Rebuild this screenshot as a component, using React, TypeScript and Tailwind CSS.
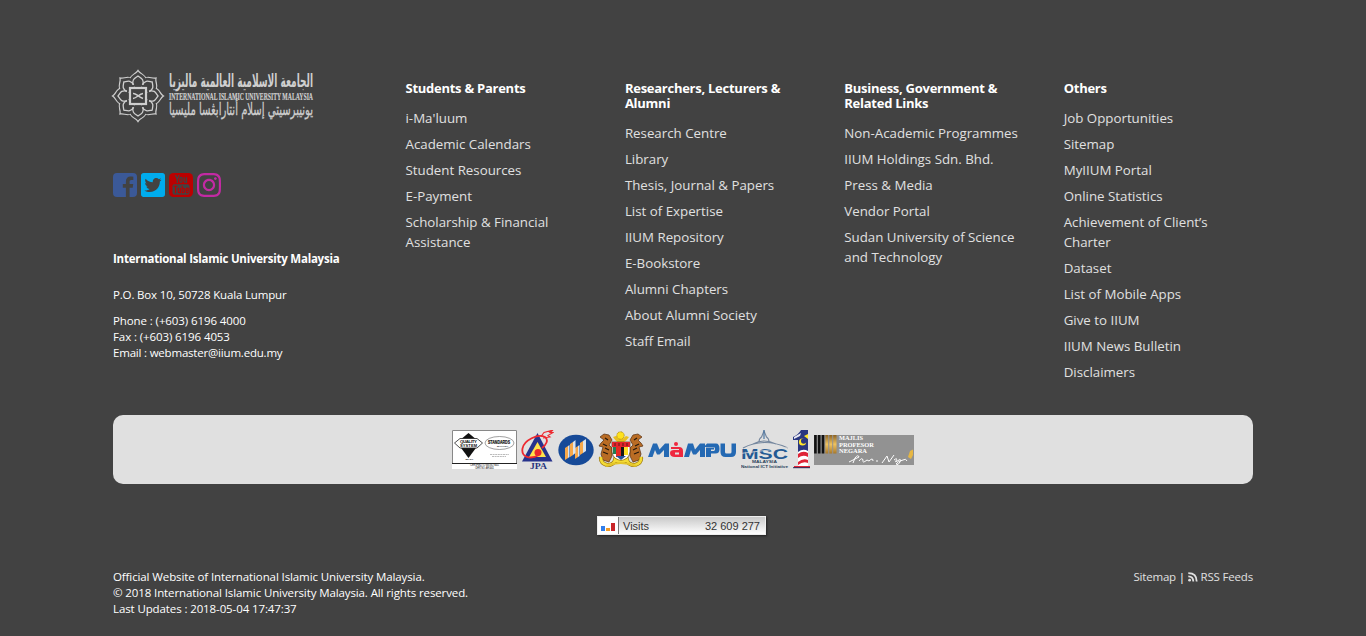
import React from "react";
import { FaInstagram, FaTwitterSquare } from "react-icons/fa";

type Column = { title: string[]; links: string[][] };

const columns: Column[] = [
  {
    title: ["Students & Parents"],
    links: [["i-Ma'luum"], ["Academic Calendars"], ["Student Resources"], ["E-Payment"], ["Scholarship & Financial", "Assistance"]],
  },
  {
    title: ["Researchers, Lecturers &", "Alumni"],
    links: [["Research Centre"], ["Library"], ["Thesis, Journal & Papers"], ["List of Expertise"], ["IIUM Repository"], ["E-Bookstore"], ["Alumni Chapters"], ["About Alumni Society"], ["Staff Email"]],
  },
  {
    title: ["Business, Government &", "Related Links"],
    links: [["Non-Academic Programmes"], ["IIUM Holdings Sdn. Bhd."], ["Press & Media"], ["Vendor Portal"], ["Sudan University of Science", "and Technology"]],
  },
  {
    title: ["Others"],
    links: [["Job Opportunities"], ["Sitemap"], ["MyIIUM Portal"], ["Online Statistics"], ["Achievement of Client’s", "Charter"], ["Dataset"], ["List of Mobile Apps"], ["Give to IIUM"], ["IIUM News Bulletin"], ["Disclaimers"]],
  },
];

const petals = [0, 45, 90, 135, 180, 225, 270, 315];
const petalShape = "M25 1.500C27 4.500 33.500 5.500 32.500 11C32 15 29 17 25 18C21 17 18 15 17.500 11C16.500 5.500 23 4.500 25 1.500Z";

function UniversityLogo() {
  return (
    <svg width="204" height="52" viewBox="0 0 204 52" className="block overflow-visible">
      <g stroke="#cfcfcf" fill="none">
        {petals.map((a) => <path key={a} d={petalShape} transform={`rotate(${a} 25 26)`} strokeWidth="2.400" />)}
        {petals.map((a) => <path key={a} d={petalShape} transform={`rotate(${a} 25 26)`} fill="#424242" stroke="none" />)}
        {petals.map((a) => <path key={a} d="M20 15C19 9 21.500 8.500 25 6C28.500 8.500 31 9 30 15" transform={`rotate(${a} 25 26)`} strokeWidth="1.300" />)}
        <rect x="17" y="18" width="16" height="16" fill="#424242" strokeWidth="2.200" />
        <path d="M20 23.500C23 23 24 26 30 28.500M20 28.500C24 28 26 24 30 23.500" strokeWidth="1.500" />
      </g>
      <g fill="#cfcfcf">
        <text x="200" y="16.500" direction="rtl" fontFamily="DejaVu Sans, sans-serif" fontWeight="bold" fontSize="18" textLength="144" lengthAdjust="spacingAndGlyphs">الجامعة الاسلامية العالمية ماليزيا</text>
        <text x="56" y="29.500" fontFamily="Liberation Serif, serif" fontWeight="bold" fontSize="9.500" stroke="#cfcfcf" strokeWidth=".2" textLength="144" lengthAdjust="spacingAndGlyphs">INTERNATIONAL ISLAMIC UNIVERSITY MALAYSIA</text>
        <text x="200" y="45" direction="rtl" fontFamily="DejaVu Sans, sans-serif" fontSize="16.500" stroke="#cfcfcf" strokeWidth=".3" textLength="144" lengthAdjust="spacingAndGlyphs">يونيبرسيتي إسلام أنتارابڠسا مليسيا</text>
      </g>
    </svg>
  );
}

function Facebook() {
  return (
    <svg width="24" height="24" viewBox="0 0 24 24">
      <path fill="#3b5998" d="M4 0H20Q24 0 24 4V20Q24 24 20 24H16.600V14.700H19.700L20.200 11.100H16.600V8.800C16.600 7.700 16.900 7 18.400 7H20.300V3.800C20 3.700 18.800 3.600 17.500 3.600C14.800 3.600 12.900 5.300 12.900 8.400V11.100H9.800V14.700H12.900V24H4Q0 24 0 20V4Q0 0 4 0Z" />
    </svg>
  );
}

function Youtube() {
  return (
    <svg width="24" height="24" viewBox="0 0 24 24">
      <rect width="24" height="24" rx="4.500" fill="#bb0000" />
      <g fill="none" stroke="#424242" strokeWidth="1.250">
        <path d="M6.500 2L8.300 6.200L10.100 2M8.300 6V10M15.200 4.200V8.300Q15.200 9.500 16.200 9.200Q17.500 8.800 17.500 8V4.200M17.500 8V10" />
        <rect x="10.900" y="4.400" width="2.200" height="5" rx="1.100" />
      </g>
      <rect x="3.500" y="11.200" width="17" height="10.600" rx="2" fill="#424242" />
      <g fill="none" stroke="#bb0000" strokeWidth="1.150">
        <path d="M4.600 13.200H8.400M6.500 13.200V20.200M9.200 14.800V19Q10 20.500 11.400 18.800V14.800M11.400 18V20.200M13.200 12.700V20.200M13.200 15.800Q15.400 14.600 15.400 16V18.800Q15.400 20 13.200 19.300M17.200 17.200H19.300V16Q19.300 15 18.300 15Q17.200 15 17.200 16V18.800Q17.200 19.800 18.300 19.800Q19.300 19.800 19.300 18.300" />
      </g>
    </svg>
  );
}

function QualityLogo() {
  return (
    <svg width="65" height="39" viewBox="0 0 65 39">
      <rect width="65" height="39" fill="#fff" />
      <path d="M.5 34V.5H64.500V34" fill="none" stroke="#888" strokeWidth="1" />
      <path d="M16.500 3L28 12.500L16.500 28L5 12.500Z" fill="#111" />
      <path d="M8 8.500H25L30.500 13L25 18H8L2.500 13Z" fill="#fff" stroke="#222" strokeWidth=".8" strokeLinejoin="round" />
      <g fontFamily="Liberation Sans, sans-serif" fontWeight="bold" fill="#111">
        <text x="8" y="13" fontSize="4.400" textLength="17">QUALITY</text>
        <text x="8" y="17" fontSize="4" textLength="17">SYSTEM</text>
        <text x="13.500" y="30.200" fontSize="2.200">MS ISO</text>
        <text x="36" y="14.300" fontSize="4.600" stroke="#111" strokeWidth=".2" textLength="22" lengthAdjust="spacingAndGlyphs">STANDARDS</text>
        <text x="45" y="17.200" fontSize="2.200">MALAYSIA</text>
      </g>
      <ellipse cx="47.500" cy="13" rx="14.500" ry="6.500" fill="none" stroke="#777" strokeWidth=".7" />
      <path d="M38 24.500H57M40 26.500H54" stroke="#aaa" strokeWidth=".8" strokeDasharray="2 .6" />
      <path d="M0 33.500H65" stroke="#222" strokeWidth="1" />
      <g fontFamily="Liberation Sans, sans-serif" fontSize="2.600" fill="#222"><text x="18" y="36.300" textLength="29">CERTIFIED TO MS ISO 9001</text><text x="23" y="38.700" textLength="19">CERT. NO. : AR 0001</text></g>
    </svg>
  );
}

function JpaLogo() {
  return (
    <svg width="33" height="39" viewBox="0 0 33 39">
      <path d="M16.500 3L31.500 31.500H1Z" fill="#26328c" />
      <path d="M16.500 12L25 27H8Z" fill="#ffe24b" />
      <circle cx="17" cy="22.500" r="3.500" fill="#e92a2c" />
      <path d="M18 25C9 30 0 27 1.500 18.500C3 10 17 3.500 24 7C28 10 25 15 21 18" fill="none" stroke="#ed2930" strokeWidth="1.800" />
      <path d="M20 6.500L23 2.500L32 0L29 2.500H32L27 5.500L29 7L22 8" fill="none" stroke="#ed2930" strokeWidth="1.100" />
      <text x="9" y="38.500" fontFamily="Liberation Serif, serif" fontWeight="bold" fontSize="7.300" fill="#28347d" textLength="17" lengthAdjust="spacingAndGlyphs">JPA</text>
    </svg>
  );
}

function PillarLogo() {
  return (
    <svg width="36" height="32" viewBox="0 0 36 32">
      <ellipse cx="18" cy="16" rx="17.700" ry="15.300" fill="#174a98" />
      <path d="M7 14L10 12V24L7 26ZM12 10L15 8V21L12 23ZM17 14L20 12V23L17 25ZM22 9L25 7V19L22 21Z" fill="#f7a84a" />
      <path d="M10 12L11.500 11V23L10 24ZM15 8L17.500 6V19L15 21ZM20 12L21.500 11V22L20 23ZM25 7L28 5V17L25 19Z" fill="#dce4ed" />
    </svg>
  );
}

function CrestLogo() {
  return (
    <svg width="46" height="38" viewBox="0 0 46 38">
      <path d="M15 6Q22.500 18 31 6L28 5Q23 11 18 5Z" fill="#e9bf21" />
      <circle cx="22.500" cy="4.500" r="3.700" fill="#ffe21d" stroke="#ad8b1d" strokeWidth="1" strokeDasharray="1 .6" />
      <g fill="#b96c24" stroke="#633b1d" strokeWidth=".8">
        <path d="M14 9L11 4L6 3L2 6L6 9L3 12L1 15L5 16L3 23L5 29L11 31L14 25V17L11 14Z" />
        <path d="M32 9L35 4L40 3L44 6L40 9L43 12L45 15L41 16L43 23L41 29L35 31L32 25V17L35 14Z" />
      </g>
      <path d="M7 7L10 9M5 13L9 15M7 17L11 19M5 21L10 23M39 7L36 9M41 13L37 15M39 17L35 19M41 21L36 23" stroke="#25180c" strokeWidth="1.200" />
      <path d="M14 11H32V21Q31 28 23 31Q15 28 14 21Z" fill="#fff" stroke="#5a3a11" strokeWidth=".7" />
      <path d="M14 11H32V16H14Z" fill="#e3242c" />
      <path d="M17 12V15M21 12V15M25 12V15M29 12V15" stroke="#5c1b16" />
      <path d="M18 16H23V26H18Z" fill="#e42a25" /><path d="M23 16H26V26H23Z" fill="#171717" /><path d="M26 16H30V24H26Z" fill="#ffdf28" /><path d="M15 16H18V23H15Z" fill="#217e55" />
      <path d="M18 25L23 29L28 25Z" fill="#24509a" />
      <path d="M3 26Q2 32 9 34Q16 34 17 29Q23 33 29 29Q30 34 37 34Q44 32 43 26" fill="none" stroke="#9e7a12" strokeWidth="4" />
      <path d="M3 26Q2 32 9 34Q16 34 17 29Q23 33 29 29Q30 34 37 34Q44 32 43 26" fill="none" stroke="#f4db34" strokeWidth="2.600" />
      <path d="M8 35Q22.500 29 38 35" fill="none" stroke="#e4c52a" strokeWidth="2" />
    </svg>
  );
}

function MampuLogo() {
  return (
    <svg width="89" height="18" viewBox="0 0 89 18">
      <g fill="#2469b3">
        <path d="M0 16L5 2.500H9L11.500 8.500L17 2.500H21V16H16V9L11.500 13.500H9L7 9L4.500 16Z" />
        <path d="M36 16L40 2.500H45L47 8.500L52 2.500H57V16H52V9L48 13.500H45L43 9L41 16Z" />
        <path fillRule="evenodd" d="M58 16V6.500H66V8.500H63V10H66Q67 9.500 67 8Q67 6 65.500 6H56L59 2.500H68Q71.500 2.500 71.500 8Q71.500 12.500 67.500 12.500H63V16Z" />
        <path d="M72.500 2.500H77V11Q77 12.500 78.500 12.500H82Q83.500 12.500 83.500 11V2.500H88V11Q88 16 83 16H77.500Q72.500 16 72.500 11Z" />
      </g>
      <path d="M23 6H31Q35 6 35 10V16H27Q22 16 22 12Q22 9 26 9H31V8H23ZM27 11.500V13.500H31V11.500Z" fill="#ef283e" fillRule="evenodd" />
      <circle cx="28" cy="3" r="2" fill="#ef283e" />
    </svg>
  );
}

function MscLogo() {
  return (
    <svg width="48" height="39" viewBox="0 0 48 39">
      <g fill="none" stroke="#75879e" strokeWidth="1.100">
        <path d="M2 18Q23 7 47 18M12 14Q23 8 35 14" />
        <path d="M18 12Q18 8.500 20.500 7L23 1L25.500 7Q28 8.500 28 12" />
        <path d="M23 0V9" stroke="#3e6e9e" />
      </g>
      <text x="0" y="28.500" fontFamily="Liberation Sans, sans-serif" fontWeight="bold" fontSize="14" fill="#245a93" textLength="47" lengthAdjust="spacingAndGlyphs">MSC</text>
      <path d="M-1 23.500Q20 21 48 17.500" fill="none" stroke="#e0e0e0" strokeWidth=".8" />
      <g fontFamily="Liberation Sans, sans-serif" fontWeight="bold" fill="#29425a"><text x="11" y="33" fontSize="4.400" textLength="25" lengthAdjust="spacingAndGlyphs">MALAYSIA</text><text x="0" y="37.700" fontSize="4.300" textLength="47" lengthAdjust="spacingAndGlyphs">National ICT Initiative</text></g>
    </svg>
  );
}

function OneLogo() {
  return (
    <svg width="17" height="39" viewBox="0 0 17 39">
      <path d="M0 7Q5 5 8 0H15V36H17V38H1V36H5V10H0Z" fill="#293780" />
      <path d="M1 7L8 3L7 6L1 9Z" fill="#e8e8f2" />
      <circle cx="9.500" cy="12" r="3.600" fill="#ffe62b" /><circle cx="10.700" cy="11" r="2.700" fill="#293780" /><path d="M11 6L15 4V9Z" fill="#ffe62b" />
      <path d="M5 22Q10 18 15 21V36H5Z" fill="#fff" />
      <path d="M5 24Q10 20 15 23V27Q10 24 5 28ZM5 32Q10 28 15 30V33Q10 31 5 35ZM5 36H17V38H1V36Z" fill="#df2437" />
      <path d="M0 37.700H17" stroke="#262e5d" />
    </svg>
  );
}

function MajlisLogo() {
  return (
    <svg width="100" height="30" viewBox="0 0 100 30">
      <defs><linearGradient id="gold" x2="0" y2="1"><stop stopColor="#8b6223" /><stop offset=".5" stopColor="#f0c35f" /><stop offset="1" stopColor="#a8792c" /></linearGradient></defs>
      <rect width="100" height="30" fill="#929292" />
      <path d="M1.400 0V18.500M5.200 0V18.500M9 0V18.500" stroke="#111" strokeWidth="2.600" />
      <path d="M11.400 0H14.200V18.500H11.400ZM15.300 0H18.200V18.500H15.300ZM19.200 0H22.500V18.500H19.200Z" fill="url(#gold)" />
      <g fontFamily="Liberation Serif, serif" fontWeight="bold" fontSize="6.300" fill="#fff"><text x="25" y="5" textLength="24" lengthAdjust="spacingAndGlyphs">MAJLIS</text><text x="25" y="11.500" textLength="35" lengthAdjust="spacingAndGlyphs">PROFESOR</text><text x="25" y="18" textLength="28" lengthAdjust="spacingAndGlyphs">NEGARA</text></g>
      <path d="M35 27Q41 24 45 22Q44 19 41 23L39 28M45 26Q48 22 49 25Q48 29 53 25L55 26Q59 22 59 26M62 26H64M68 28L73 21L75 27L80 20M80 25Q84 22 82 26Q80 28 85 25Q87 23 86 27Q84 31 82 29Q84 26 89 25Q92 23 93 26" fill="none" stroke="#fff" strokeWidth="1" />
      <path d="M94 22L96 16L99 14.500V20L97 24Z" fill="#e7b743" />
    </svg>
  );
}

function FeedIcon() {
  return (
    <svg width="10" height="10" viewBox="0 0 10 10" fill="none" stroke="currentColor" strokeWidth="1.800">
      <circle cx="1.600" cy="8.200" r="1.400" fill="currentColor" stroke="none" />
      <path d="M.3 4.300Q5.300 4.300 5.300 9.500M.3 1.200Q8.700 1.200 8.700 9.500" />
    </svg>
  );
}

export default function App() {
  return (
    <footer className="h-[636px] w-full overflow-hidden bg-[#424242] font-['Open_Sans','Noto_Sans',sans-serif] text-white">
      <div className="mx-auto flex h-full w-[1140px] flex-col pt-[70px]">
        <div className="flex h-[345px] shrink-0">
          <section className="w-[292.500px] shrink-0 text-[11.500px] leading-4">
            <UniversityLogo />
            <div className="mt-[51px] flex h-6 gap-1">
              <Facebook />
              <svg width="24" height="24" className="text-[#00aced]"><FaTwitterSquare x="-1.700" y="-1.700" size={27.400} /></svg>
              <Youtube />
              <svg width="24" height="24" className="text-[#c32aa3]"><FaInstagram x="-1.700" y="-1.700" size={27.400} /></svg>
            </div>
            <h2 className="mt-[54px] whitespace-nowrap font-bold tracking-[-0.240px]">International Islamic University Malaysia</h2>
            <p className="mt-5 tracking-[-0.160px]">P.O. Box 10, 50728 Kuala Lumpur</p>
            <p className="mt-[10px] tracking-[-0.100px]">Phone : (+603) 6196 4000<br />Fax : (+603) 6196 4053<br /><span className="tracking-[-0.200px]">Email : webmaster@iium.edu.my</span></p>
          </section>
          {columns.map((column) => (
            <nav key={column.title[0]} className="w-[219.400px] shrink-0 whitespace-nowrap pt-[11px]">
              <h3 className="text-[13px] font-bold leading-[15px] tracking-[-0.260px]">
                {column.title.map((line) => <span key={line} className="block">{line}</span>)}
              </h3>
              <ul className="mt-3 flex flex-col gap-1.5 text-[13.300px] leading-5 text-[#e0e0e0]">
                {column.links.map((lines) => (
                  <li key={lines[0]}>{lines.map((line) => <span key={line} className="block">{line}</span>)}</li>
                ))}
              </ul>
            </nav>
          ))}
        </div>
        <div className="flex h-[69px] shrink-0 items-center justify-center gap-1 rounded-[10px] bg-[#e0e0e0] pr-px">
          <QualityLogo /><JpaLogo /><PillarLogo /><CrestLogo /><MampuLogo /><MscLogo /><OneLogo /><MajlisLogo />
        </div>
        <div className="mr-[3px] mt-8 flex h-[19px] w-[169px] shrink-0 self-center border border-[#eee] bg-gradient-to-b from-[#c9c9c9] to-white font-['Liberation_Sans',sans-serif] text-[11px] leading-[18px] text-[#333] shadow-[1px_1px_2px_#222]">
          <div className="flex w-[21px] items-end justify-center gap-px border-r border-[#777] bg-white pb-[3px]">
            <span className="h-[5px] w-1 bg-[#327eea]" /><span className="h-[3px] w-1 bg-[#f29b26]" /><span className="h-2 w-1 bg-[#c92629]" />
          </div>
          <span className="ml-1">Visits</span><span className="ml-auto mr-[5px]">32 609 277</span>
        </div>
        <div className="mt-[34px] flex justify-between whitespace-nowrap text-[11.500px] leading-4 tracking-[-0.110px]">
          <p>Official Website of International Islamic University Malaysia.<br />© 2018 International Islamic University Malaysia. All rights reserved.<br />Last Updates : 2018-05-04 17:47:37</p>
          <p className="flex h-4 items-center tracking-[-0.180px] text-[#e0e0e0]">Sitemap&nbsp;<span className="text-white">|</span>&nbsp;<FeedIcon />&nbsp;RSS Feeds</p>
        </div>
      </div>
    </footer>
  );
}
